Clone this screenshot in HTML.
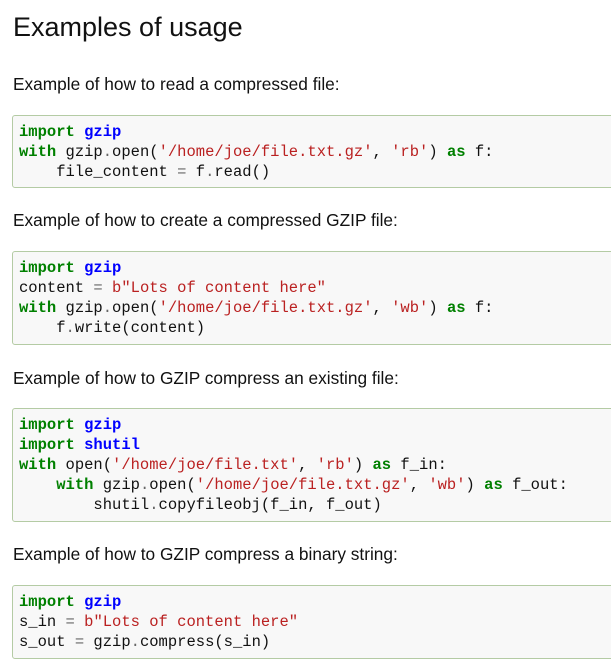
<!DOCTYPE html>
<html><head><meta charset="utf-8"><style>
body{margin:0;width:611px;height:666px;overflow:hidden;background:#fff;font-family:"Liberation Sans",sans-serif;color:#111;position:relative}
h1{position:absolute;left:13px;top:9px;margin:0;font-weight:normal;font-size:27px;line-height:36px}
p{position:absolute;left:13px;margin:0;font-size:17.3px;line-height:22px}
pre{position:absolute;left:12px;width:620px;margin:0;box-sizing:border-box;border:1px solid #b4cba4;border-radius:3px;background:#f8f8f8;padding:6px 6px 4px;font-family:"Liberation Mono",monospace;font-size:15.5px;line-height:20px;color:#111}
.k{color:#008000;font-weight:bold}.n{color:#0000ff;font-weight:bold}.s{color:#ba2121}.o{color:#666}
</style></head><body>
<h1>Examples of usage</h1>
<p style="top:73px">Example of how to read a compressed file:</p>
<pre style="top:115px;height:73px"><span class="k">import</span> <span class="n">gzip</span>
<span class="k">with</span> gzip<span class="o">.</span>open(<span class="s">'/home/joe/file.txt.gz'</span>, <span class="s">'rb'</span>) <span class="k">as</span> f:
    file_content <span class="o">=</span> f<span class="o">.</span>read()</pre>
<p style="top:209px">Example of how to create a compressed GZIP file:</p>
<pre style="top:251px;height:94px"><span class="k">import</span> <span class="n">gzip</span>
content <span class="o">=</span> <span class="s">b"Lots of content here"</span>
<span class="k">with</span> gzip<span class="o">.</span>open(<span class="s">'/home/joe/file.txt.gz'</span>, <span class="s">'wb'</span>) <span class="k">as</span> f:
    f<span class="o">.</span>write(content)</pre>
<p style="top:367px">Example of how to GZIP compress an existing file:</p>
<pre style="top:408px;height:114px"><span class="k">import</span> <span class="n">gzip</span>
<span class="k">import</span> <span class="n">shutil</span>
<span class="k">with</span> open(<span class="s">'/home/joe/file.txt'</span>, <span class="s">'rb'</span>) <span class="k">as</span> f_in:
    <span class="k">with</span> gzip<span class="o">.</span>open(<span class="s">'/home/joe/file.txt.gz'</span>, <span class="s">'wb'</span>) <span class="k">as</span> f_out:
        shutil<span class="o">.</span>copyfileobj(f_in, f_out)</pre>
<p style="top:543px">Example of how to GZIP compress a binary string:</p>
<pre style="top:585px;height:74px"><span class="k">import</span> <span class="n">gzip</span>
s_in <span class="o">=</span> <span class="s">b"Lots of content here"</span>
s_out <span class="o">=</span> gzip<span class="o">.</span>compress(s_in)</pre>
</body></html>
